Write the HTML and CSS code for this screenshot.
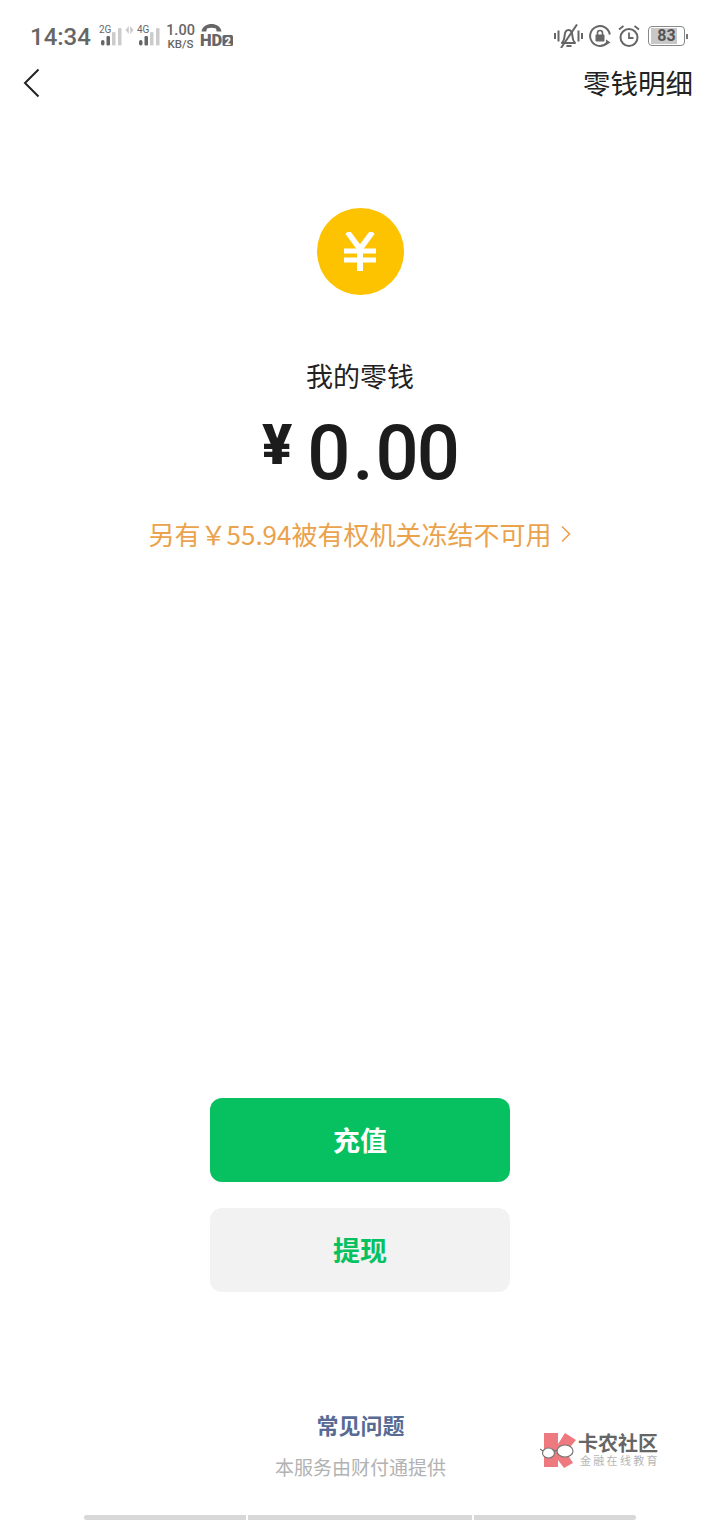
FILE: index.html
```html
<!DOCTYPE html>
<html lang="zh-CN">
<head>
<meta charset="utf-8">
<title>我的零钱</title>
<link rel="stylesheet" href="styles.css">
</head>
<body>
<div class="page">
  <header class="status">
    <div class="status-left">
      <span class="time">14:34</span>
      <svg class="sig sig-first" width="24" height="24" viewBox="0 0 24 24">
        <text x="0" y="9" class="sig-label">2G</text>
        <rect x="2" y="16" width="3.500" height="5.500" rx="1.700" fill="#666"/>
        <rect x="7.500" y="12" width="3.500" height="9.500" rx="1.200" fill="#666"/>
        <rect x="13" y="8" width="3.500" height="13.500" rx="1.200" fill="#ccc"/>
        <rect x="19" y="4" width="3.500" height="17.500" rx="1.200" fill="#ccc"/>
      </svg>
      <svg class="arrows" width="9" height="9" viewBox="0 0 9 9">
        <path d="M3.800 0v8L.5 4zM5.200 0v8l3.300-4z" fill="#ccc"/>
      </svg>
      <svg class="sig sig-second" width="24" height="24" viewBox="0 0 24 24">
        <text x="0" y="9" class="sig-label">4G</text>
        <rect x="2" y="16" width="3.500" height="5.500" rx="1.700" fill="#666"/>
        <rect x="7.500" y="12" width="3.500" height="9.500" rx="1.200" fill="#666"/>
        <rect x="13" y="8" width="3.500" height="13.500" rx="1.200" fill="#ccc"/>
        <rect x="19" y="4" width="3.500" height="17.500" rx="1.200" fill="#ccc"/>
      </svg>
      <div class="speed"><span class="speed-num">1.00</span><span class="speed-unit">KB/S</span></div>
      <svg class="hd" width="34" height="30" viewBox="0 0 34 30">
        <path d="M1.500 7.500C2.500 2 7 0 11.500 0S20.500 2 21.500 7.500h-4.800l-.7-3c-2.800-1-6.200-1-9 0l-.7 3z" fill="#666"/>
        <text x="0" y="22" class="hd-text">HD</text>
        <rect x="22.500" y="11" width="10.500" height="11" rx="1.500" fill="#666"/>
        <text x="24.800" y="20.500" class="hd-two">2</text>
      </svg>
    </div>
    <div class="status-right">
      <svg class="ic-bell" width="29" height="24" viewBox="0 0 29 24" fill="none" stroke="#666" stroke-width="2">
        <path d="M1 9v6M4.500 6.500v11M24.500 6.500v11M28 9v6"/>
        <path d="M8 19h13c-1.800-2-2.400-3-2.600-7-.2-3.500-1.600-6-3.900-6s-3.700 2.500-3.900 6c-.2 4-.8 5-2.600 7z" stroke-linejoin="round"/>
        <path d="M12.500 22h5M23 .5 7 24"/>
      </svg>
      <svg class="ic-lock" width="22" height="22" viewBox="0 0 22 22" fill="none" stroke="#666" stroke-width="2">
        <path d="M20.800 9.500A9.900 9.900 0 1 0 18.500 17.500"/>
        <path d="M17 14.500l4.500 3-4.500 2.500z" fill="#666" stroke="none"/>
        <rect x="6.500" y="9.500" width="9" height="7" rx="1" fill="#666" stroke="none"/>
        <path d="M8.500 10V8a2.500 2.500 0 0 1 5 0v2" stroke-width="1.600"/>
      </svg>
      <svg class="ic-alarm" width="22" height="22" viewBox="0 0 22 22" fill="none" stroke="#666" stroke-width="2">
        <circle cx="11" cy="12.500" r="8.500"/>
        <path d="M11 7.500v5.500h4.500" stroke-width="1.800"/>
        <path d="M1 4.500 5.500 1M21 4.500 16.500 1" stroke-width="1.800"/>
      </svg>
      <div class="battery">
        <div class="battery-body">83</div>
        <span class="battery-tip"></span>
      </div>
    </div>
  </header>

  <nav class="nav">
    <svg class="back" width="18" height="30" viewBox="0 0 18 30" fill="none" stroke="#222" stroke-width="2">
      <path d="M15.500 1.500 2 15l13.500 13.500"/>
    </svg>
    <span class="nav-link">零钱明细</span>
  </nav>

  <main class="main">
    <div class="coin">
      <svg width="32" height="39" viewBox="0 0 32 39" fill="none" stroke="#fff">
        <path d="M3.500 0 16 17 28.500 0" stroke-width="5.500"/>
        <path d="M16 16v23" stroke-width="6"/>
        <path d="M0 19h32M0 28h32" stroke-width="5"/>
      </svg>
    </div>
    <p class="label">我的零钱</p>
    <div class="amount">
      <span class="amount-sign">¥</span>
      <span class="amount-num">0<span class="amount-dot">.</span>00</span>
    </div>
    <p class="frozen">
      <span>另有￥55.94被有权机关冻结不可用</span>
      <svg width="10" height="18" viewBox="0 0 10 18" fill="none" stroke="#eaa24c" stroke-width="1.600">
        <path d="M1 1.500 8.500 9 1 16.500"/>
      </svg>
    </p>
  </main>

  <div class="actions">
    <button class="btn btn-primary">充值</button>
    <button class="btn btn-secondary">提现</button>
  </div>

  <footer class="footer">
    <a class="faq">常见问题</a>
    <p class="provider">本服务由财付通提供</p>
  </footer>

  <div class="home-bar">
    <span class="seg seg-a"></span>
    <span class="seg seg-b"></span>
    <span class="seg seg-c"></span>
  </div>

  <div class="watermark">
    <svg width="38" height="40" viewBox="0 0 38 40">
      <path d="M4 3h14v11L25 3l11 7-10 12 7 11-9 5-6-8v7H4z" fill="#ee7a80"/>
      <path d="M0 19 3 21M14 21c2-1 3-1 4 0" fill="none" stroke="#777" stroke-width="1.200"/>
      <ellipse cx="8.500" cy="23" rx="6" ry="5" fill="#fff" stroke="#777" stroke-width="1.200"/>
      <ellipse cx="25" cy="21" rx="8" ry="6" fill="#fff" stroke="#777" stroke-width="1.200"/>
    </svg>
    <div class="wm-text">
      <span class="wm-title">卡农社区</span>
      <span class="wm-sub">金融在线教育</span>
    </div>
  </div>
</div>
</body>
</html>
```

FILE: styles.css
```css
* { box-sizing: border-box; }
html, body { margin: 0; padding: 0; background: #fff; }
body { font-family: "Noto Sans CJK SC", Roboto, sans-serif; }
p { margin: 0; }

.page {
  position: relative;
  width: 720px;
  height: 1520px;
  overflow: hidden;
  display: flex;
  flex-direction: column;
  background: #fff;
}

.status {
  height: 60px;
  padding: 24px 32px 0 30px;
  display: flex;
  justify-content: space-between;
  align-items: flex-start;
}
.status-left { display: flex; align-items: flex-start; height: 30px; }
.status-right { display: flex; align-items: center; height: 24px; }
.time {
  width: 61px;
  font: 500 24px/26px Roboto, sans-serif;
  color: #666;
  white-space: nowrap;
}
.sig-label { font: 400 10px Roboto, sans-serif; fill: #666; }
.sig-first { margin-left: 8px; }
.arrows { margin: 2px 0 0 2px; }
.sig-second { margin-left: 3px; }
.speed {
  width: 27px;
  margin-left: 6px;
  display: flex;
  flex-direction: column;
  align-items: center;
  font-family: Roboto, sans-serif;
  font-weight: 500;
  color: #666;
  white-space: nowrap;
}
.speed-num { font-size: 14.500px; line-height: 14px; }
.speed-unit { font-size: 11.500px; line-height: 13px; }
.hd { margin-left: 6px; }
.hd-text { font: 900 16.500px Roboto, sans-serif; fill: #666; }
.hd-two { font: 900 10.500px Roboto, sans-serif; fill: #fff; }

.ic-lock { margin-left: 6px; }
.ic-alarm { margin-left: 7px; }
.battery { display: flex; align-items: center; margin-left: 8px; }
.battery-body {
  width: 37px;
  height: 20px;
  border: 1px solid #888;
  border-radius: 4px;
  background: linear-gradient(#c8c8c8, #c8c8c8) no-repeat 2px 1px / 26px 16px;
  font: 700 16px/18px Roboto, sans-serif;
  color: #555;
  text-align: center;
}
.battery-tip { width: 2px; height: 5px; margin-left: 1px; background: #777; }

.nav {
  height: 45px;
  padding: 0 27px 0 23px;
  display: flex;
  justify-content: space-between;
  align-items: center;
}
.back { display: block; margin-top: 1px; }
.nav-link { margin-top: -2px; font-size: 27.500px; line-height: 40px; color: #222; }

.main {
  flex: 1;
  padding-top: 103px;
  display: flex;
  flex-direction: column;
  align-items: center;
}
.coin {
  width: 87px;
  height: 87px;
  border-radius: 50%;
  background: #fdc300;
  display: flex;
  align-items: center;
  justify-content: center;
}
.label {
  margin-top: 61px;
  font-size: 27px;
  line-height: 40px;
  color: #222;
}
.amount {
  margin-top: 15px;
  display: flex;
  align-items: flex-start;
  gap: 15px;
  color: #1c1c1c;
  font-family: Roboto, sans-serif;
  font-weight: 500;
}
.amount-sign { margin-top: 6px; font-size: 56px; line-height: 56px; font-weight: 900; }
.amount-num { font-size: 76px; line-height: 84px; letter-spacing: -2px; }
.amount-dot { margin: 0 4px; }
.frozen {
  margin-top: 19px;
  display: flex;
  align-items: center;
  gap: 10px;
  font-size: 26px;
  line-height: 40px;
  color: #eaa24c;
}

.actions {
  display: flex;
  flex-direction: column;
  align-items: center;
  gap: 26px;
}
.btn {
  width: 300px;
  height: 84px;
  padding: 0 0 2px;
  border: 0;
  border-radius: 12px;
  font-family: "Noto Sans CJK SC", sans-serif;
  font-size: 27px;
  font-weight: 700;
}
.btn-primary { background: #07c160; color: #fff; }
.btn-secondary { background: #f2f2f2; color: #07c160; }

.footer {
  margin-top: 116px;
  height: 102px;
  display: flex;
  flex-direction: column;
  align-items: center;
  padding-left: 1px;
}
.faq { margin-top: -2px; font-size: 22px; line-height: 36px; font-weight: 700; color: #576b95; }
.provider { margin-top: 10px; font-size: 19px; line-height: 30px; color: #b2b2b2; }

.home-bar {
  height: 5px;
  margin-top: 5px;
  padding: 0 84px;
  display: flex;
  gap: 2px;
}
.seg { display: block; height: 5px; background: #d8d8d8; }
.seg-a { width: 162px; border-radius: 3px 0 0 3px; }
.seg-b { width: 224px; }
.seg-c { width: 162px; border-radius: 0 3px 3px 0; }

.watermark {
  position: absolute;
  left: 540px;
  top: 1430px;
  display: flex;
  align-items: flex-start;
}
.wm-text { display: flex; flex-direction: column; align-items: flex-start; margin-top: 2px; }
.wm-title { font-size: 20px; line-height: 21px; font-weight: 700; color: #666; }
.wm-sub { font-size: 11px; line-height: 14px; color: #b5b5b5; letter-spacing: 2.300px; padding-left: 2px; white-space: nowrap; }
```
